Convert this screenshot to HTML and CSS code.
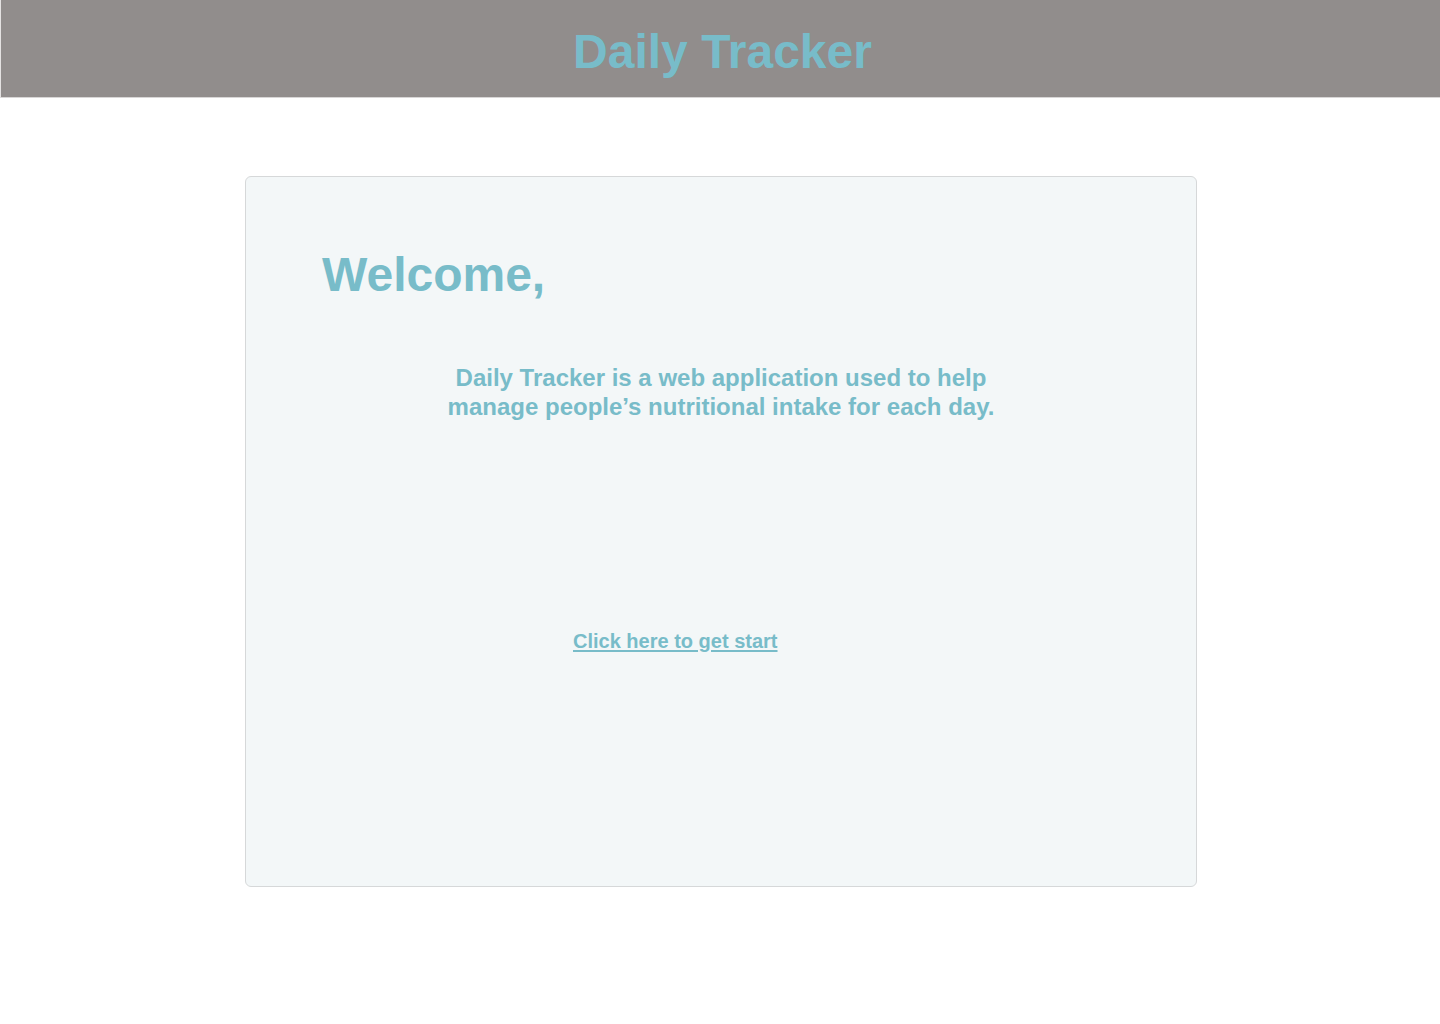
FILE: index.html
```html
<!DOCTYPE html>
<html lang="en">
<head>
<meta charset="utf-8">
<title>Daily Tracker</title>
<link rel="stylesheet" href="styles.css">
</head>
<body>
<header class="topbar">
  <h1 class="brand">Daily Tracker</h1>
</header>
<main class="page">
  <section class="card">
    <h2 class="welcome">Welcome,</h2>
    <p class="intro">Daily Tracker is a web application used to help<br>manage people’s nutritional intake for each day.</p>
    <div class="cta-row">
      <a class="cta" href="#">Click here to get start</a>
    </div>
  </section>
</main>
</body>
</html>
```

FILE: styles.css
```css
* { box-sizing: border-box; }
html, body { margin: 0; padding: 0; background: #ffffff; }
body {
  font-family: "Liberation Sans", Arial, Helvetica, sans-serif;
  color: #78bcc9;
}
.topbar {
  height: 98px;
  background: #918d8c;
  border-left: 1px solid #e4e2e2;
  border-bottom: 1px solid #d8d6d6;
  display: flex;
  align-items: center;
  justify-content: center;
  padding-top: 6px;
}
.brand {
  margin: 0;
  font-size: 48px;
  font-weight: 700;
  color: #78bcc9;
  line-height: 1;
  padding-left: 4px;
}
.page {
  display: flex;
  justify-content: center;
  padding-top: 78px;
  padding-left: 2px;
}
.card {
  width: 952px;
  height: 711px;
  background: #f3f7f8;
  border: 1px solid #d6d8d9;
  border-radius: 6px;
  padding: 70px 0 0 76px;
  display: flex;
  flex-direction: column;
}
.welcome {
  margin: 0;
  font-size: 48px;
  line-height: 56px;
  font-weight: 700;
  color: #78bcc9;
}
.intro {
  margin: 60px 0 0 -76px;
  text-align: center;
  font-size: 24px;
  line-height: 29px;
  font-weight: 700;
  color: #78bcc9;
}
.cta-row {
  margin-top: 209px;
  padding-left: 251px;
  line-height: 22px;
}
.cta {
  font-size: 20px;
  font-weight: 700;
  color: #78bcc9;
  text-decoration: underline;
  text-underline-offset: 2px;
}
```
